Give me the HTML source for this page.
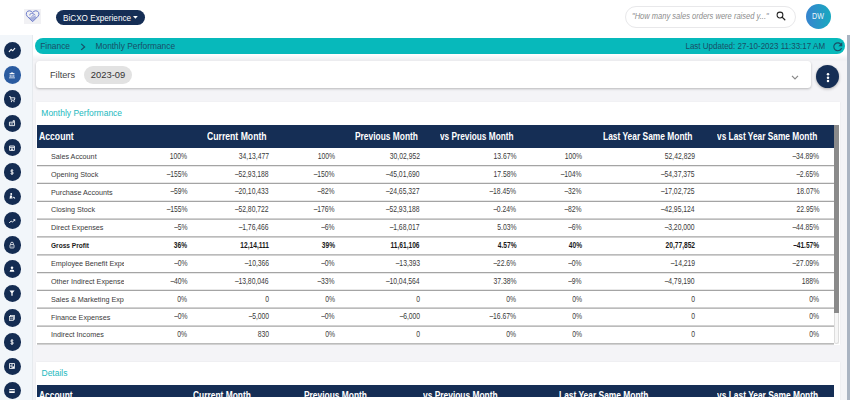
<!DOCTYPE html>
<html><head><meta charset="utf-8">
<style>
*{margin:0;padding:0;box-sizing:border-box}
html,body{width:850px;height:400px;overflow:hidden;background:#f4f4f7;font-family:"Liberation Sans",sans-serif}
.abs{position:absolute}
.t{position:absolute;white-space:nowrap;display:block}
#hdr{position:absolute;left:0;top:0;width:850px;height:35px;background:#fff}
#logo{position:absolute;left:24.2px;top:9.2px;width:16.8px;height:14.5px;background:#f1f1f4}
#pill{position:absolute;left:55.5px;top:9.8px;width:89px;height:15.6px;border-radius:8px;background:#152e55}
#search{position:absolute;left:625px;top:6px;width:171px;height:21.5px;border:1px solid #e8e8ea;border-radius:11px;background:#fff}
#avatar{position:absolute;left:805.5px;top:3.5px;width:25.5px;height:25.5px;border-radius:50%;background:linear-gradient(90deg,#3784cf,#17a9bf)}
#side{position:absolute;left:0;top:35px;width:33px;height:365px;background:#f2f6fa;border-right:1px solid #e6eaee}
.circ{position:absolute;left:3.7px;width:17.6px;height:17.6px;border-radius:50%;display:flex;align-items:center;justify-content:center}
#vscroll{position:absolute;left:847px;top:35px;width:3px;height:365px;background:#aab4c2}
#crumbbg{position:absolute;left:33px;top:35px;width:814px;height:26px;background:linear-gradient(180deg,#fff 0px,#fff 19px,#f0f0f3 25px,#f4f4f7 26px)}
#crumb{position:absolute;left:35px;top:38px;width:810px;height:15.6px;border-radius:8px;background:#07b9bb}
#filter{position:absolute;left:36px;top:61px;width:775px;height:27px;background:#fff;border-radius:3.5px;box-shadow:0 1px 2.5px rgba(0,0,0,0.25)}
#chip{position:absolute;left:84px;top:65.5px;width:48px;height:18px;border-radius:9px;background:#e2e2e2}
#kebab{position:absolute;left:816px;top:65px;width:23px;height:23px;border-radius:50%;background:#152e55;box-shadow:0 1px 3px rgba(0,0,0,0.3)}
#card1{position:absolute;left:36px;top:101.7px;width:803.5px;height:243px;background:#fff;box-shadow:0 -0.5px 1.5px rgba(0,0,0,0.08)}
#thead{position:absolute;left:37px;top:125px;width:797px;height:23px;background:#152e55}
#tscroll{position:absolute;left:834px;top:125.3px;width:5px;height:219px;background:#f6f6f6;border-radius:0 0 3px 3px;border:1px solid #ddd;border-top:none}
#tthumb{position:absolute;left:834px;top:125px;width:5px;height:188px;background:#8a8a8a}
.row{position:absolute;left:37px;width:797px;height:17.85px;border-bottom:1px solid #a0a0a0;background:#fff}
.acc{position:absolute;left:51.3px;width:72.5px;height:17px;overflow:hidden}
#tbody{position:absolute;left:37px;top:148px;width:797px;height:196.5px;background:#fff}
#card2{position:absolute;left:36px;top:361.7px;width:803.5px;height:40px;background:#fff;box-shadow:0 0 1.5px rgba(0,0,0,0.08)}
#thead2{position:absolute;left:37px;top:385px;width:797px;height:11.8px;background:#152e55;overflow:hidden}
#thead2 .t{margin-left:-37px}
</style></head><body>
<div id="hdr"></div>
<div id="logo"><svg width="17" height="15" viewBox="0 0 17 15"><path d="M8.6 12.7 L3.1 7.2 Q1.8 5.6 2.5 3.6 Q3.4 1.7 5.5 1.8 Q7.3 2 8.6 3.4 Q9.9 2 11.7 1.8 Q13.8 1.7 14.7 3.6 Q15.4 5.6 14.1 7.2 Z" fill="none" stroke="#6b7bcb" stroke-width="1.0"/><path d="M4.2 8.2 L8.6 12.2 L12.6 8.2 L10.6 6.4 L8.2 8.2 Z" fill="#6b7bcb" opacity="0.55"/><path d="M5.8 6.4 Q5.4 4.8 7.2 4.4 L9.8 4.8 L11.4 6.2 M7.4 7.8 L10 5.6" stroke="#6b7bcb" stroke-width="0.8" fill="none"/></svg></div>
<div id="pill"></div>
<span class="t" style="top:7.99px;line-height:20px;font-size:8.6px;color:#fff;left:62.60px;transform-origin:0 50%;transform:scaleX(0.95);">BiCXO Experience</span>
<svg class="abs" style="left:133px;top:16.3px" width="4.8" height="2.8" viewBox="0 0 4.8 2.8"><path d="M0 0 H4.8 L2.4 2.8Z" fill="#fff"/></svg>
<div id="search"></div>
<span class="t" style="top:6.58px;line-height:20px;font-size:8.2px;color:#8c8c8c;left:631.80px;transform-origin:0 50%;transform:scaleX(0.92);font-style:italic;">"How many sales orders were raised y..."</span>
<svg class="abs" style="left:776px;top:10.5px" width="10" height="10" viewBox="0 0 10 10"><circle cx="4" cy="4" r="2.9" stroke="#222" stroke-width="1.05" fill="none"/><path d="M6.1 6.1 L8.8 8.8" stroke="#222" stroke-width="1.3" stroke-linecap="round"/></svg>
<div id="avatar"></div>
<span class="t" style="top:6.28px;line-height:20px;font-size:8.3px;color:#eef6fb;left:812.20px;transform-origin:0 50%;transform:scaleX(0.86);">DW</span>
<div id="side"><div class="circ" style="top:6.7px;background:#142c52"><svg width="8" height="8" viewBox="0 0 10 10"><path d="M1.5 7 L4 4.2 L5.8 6 L8.5 3" stroke="#ffffff" stroke-width="1.3" fill="none" stroke-linecap="round" stroke-linejoin="round"/></svg></div><div class="circ" style="top:31.0px;background:#2a5ba0"><svg width="8" height="8" viewBox="0 0 10 10"><path d="M5 1.5 L9 3.6 L1 3.6 Z M1.3 8.2 H8.7 V9 H1.3 Z M2.2 4.3 H3.2 V7.6 H2.2Z M4.5 4.3 H5.5 V7.6 H4.5Z M6.8 4.3 H7.8 V7.6 H6.8Z" fill="#ffffff"/></svg></div><div class="circ" style="top:55.3px;background:#142c52"><svg width="8" height="8" viewBox="0 0 10 10"><path d="M1.5 2 H3 L4 6.5 H8 L8.6 3.5 H3.4" stroke="#ffffff" stroke-width="1.1" fill="none"/><circle cx="4.3" cy="8.2" r="0.8" fill="#ffffff"/><circle cx="7.5" cy="8.2" r="0.8" fill="#ffffff"/></svg></div><div class="circ" style="top:79.6px;background:#142c52"><svg width="8" height="8" viewBox="0 0 10 10"><path d="M1.8 4 H8.2 V8.3 H1.8 Z M6.5 4 V2 H8 V4" stroke="#ffffff" stroke-width="1.1" fill="none"/><path d="M3 6.2 H6.5" stroke="#ffffff" stroke-width="1"/></svg></div><div class="circ" style="top:103.9px;background:#142c52"><svg width="8" height="8" viewBox="0 0 10 10"><path d="M2 2.5 H8 V8 H2 Z M2 4.2 H8" stroke="#ffffff" stroke-width="1.1" fill="none"/><rect x="4" y="5.5" width="2" height="2.5" fill="#ffffff"/></svg></div><div class="circ" style="top:128.2px;background:#142c52"><svg width="8" height="8" viewBox="0 0 10 10"><path d="M6.7 3.4 Q6.4 2.6 5 2.6 Q3.4 2.6 3.4 3.8 Q3.4 4.8 5 5 Q6.7 5.2 6.7 6.3 Q6.7 7.5 5 7.5 Q3.5 7.5 3.2 6.6 M5 1.4 V8.7" stroke="#ffffff" stroke-width="1.05" fill="none"/></svg></div><div class="circ" style="top:152.5px;background:#142c52"><svg width="8" height="8" viewBox="0 0 10 10"><circle cx="4" cy="2.6" r="1.2" fill="#ffffff"/><path d="M2.5 4.3 H5 L5.5 8.5 H4.3 L4 6.5 L3.3 8.5 H2 Z" fill="#ffffff"/><path d="M6 7 L8.5 7 M7 6 L8.5 8.5" stroke="#ffffff" stroke-width="0.9"/></svg></div><div class="circ" style="top:176.8px;background:#142c52"><svg width="8" height="8" viewBox="0 0 10 10"><path d="M1.5 7.5 L4 5 L5.6 6.4 L8.3 3.6" stroke="#ffffff" stroke-width="1.2" fill="none" stroke-linejoin="round"/><path d="M6.2 2.8 H9 V5.6 Z" fill="#ffffff"/></svg></div><div class="circ" style="top:201.1px;background:#142c52"><svg width="8" height="8" viewBox="0 0 10 10"><path d="M3.3 4.5 V3.2 A1.7 1.7 0 0 1 6.7 3.2 V4.5" stroke="#ffffff" stroke-width="1" fill="none"/><rect x="2.5" y="4.5" width="5" height="4.2" rx="0.6" stroke="#ffffff" stroke-width="1" fill="none"/><circle cx="5" cy="6.6" r="0.6" fill="#ffffff"/></svg></div><div class="circ" style="top:225.4px;background:#142c52"><svg width="8" height="8" viewBox="0 0 10 10"><circle cx="5" cy="3.5" r="1.6" fill="#ffffff"/><path d="M2 8.3 Q2 5.6 5 5.6 Q8 5.6 8 8.3 Z" fill="#ffffff"/></svg></div><div class="circ" style="top:249.7px;background:#142c52"><svg width="8" height="8" viewBox="0 0 10 10"><path d="M1.8 2 H8.2 L5.8 5 V8.3 H4.2 V5 Z" fill="#ffffff"/></svg></div><div class="circ" style="top:274.0px;background:#142c52"><svg width="8" height="8" viewBox="0 0 10 10"><rect x="3" y="1.8" width="5.2" height="5.2" stroke="#ffffff" stroke-width="0.9" fill="none"/><rect x="1.8" y="3" width="5.2" height="5.2" stroke="#ffffff" stroke-width="0.9" fill="#142c52"/><path d="M2.8 5 H6 M2.8 6.3 H6" stroke="#ffffff" stroke-width="0.7"/></svg></div><div class="circ" style="top:298.3px;background:#142c52"><svg width="8" height="8" viewBox="0 0 10 10"><path d="M6.7 3.4 Q6.4 2.6 5 2.6 Q3.4 2.6 3.4 3.8 Q3.4 4.8 5 5 Q6.7 5.2 6.7 6.3 Q6.7 7.5 5 7.5 Q3.5 7.5 3.2 6.6 M5 1.4 V8.7" stroke="#ffffff" stroke-width="1.05" fill="none"/></svg></div><div class="circ" style="top:322.6px;background:#142c52"><svg width="8" height="8" viewBox="0 0 10 10"><rect x="2" y="2" width="6" height="6" stroke="#ffffff" stroke-width="1" fill="none"/><path d="M5 2 V8 M2 5 H5" stroke="#ffffff" stroke-width="1"/><rect x="5.5" y="5.5" width="2" height="2" fill="#ffffff"/></svg></div><div class="circ" style="top:346.9px;background:#142c52"><svg width="8" height="8" viewBox="0 0 10 10"><rect x="1.5" y="2.5" width="7" height="5" rx="0.5" fill="#ffffff"/><rect x="1.5" y="4" width="7" height="1.3" fill="#142c52"/></svg></div></div>
<div id="vscroll"></div>
<div id="crumbbg"></div><div id="crumb"></div>
<span class="t" style="top:36.29px;line-height:20px;font-size:8.4px;color:#194e66;left:40.20px;transform-origin:0 50%;">Finance</span>
<svg class="abs" style="left:80px;top:42.5px" width="6" height="8" viewBox="0 0 6 8"><path d="M1.2 0.9 L4.6 3.9 L1.2 6.9" stroke="#194e66" stroke-width="1.25" fill="none"/></svg>
<span class="t" style="top:36.29px;line-height:20px;font-size:8.4px;color:#194e66;left:95.50px;transform-origin:0 50%;">Monthly Performance</span>
<span class="t" style="top:36.29px;line-height:20px;font-size:8.4px;color:#194e66;right:24.80px;transform-origin:100% 50%;transform:scaleX(0.956);">Last Updated: 27-10-2023 11:33:17 AM</span>
<svg class="abs" style="left:830.6px;top:40px" width="13.5" height="13.5" viewBox="0 0 24 24"><path d="M17.65 6.35C16.2 4.9 14.21 4 12 4c-4.42 0-7.99 3.58-7.99 8s3.57 8 7.99 8c3.73 0 6.84-2.55 7.73-6h-2.08c-.82 2.33-3.04 4-5.65 4-3.31 0-6-2.69-6-6s2.69-6 6-6c1.66 0 3.14.69 4.22 1.78L13 11h7V4l-2.35 2.35z" fill="#194e66"/></svg>
<div id="filter"></div>
<span class="t" style="top:65.32px;line-height:20px;font-size:9.4px;color:#444;left:49.60px;transform-origin:0 50%;transform:scaleX(0.98);">Filters</span>
<svg class="abs" style="left:790.5px;top:74.5px" width="8" height="5" viewBox="0 0 8 5"><path d="M1 0.9 L4 3.9 L7 0.9" stroke="#888" stroke-width="1.2" fill="none"/></svg>
<div id="chip"></div>
<span class="t" style="top:64.52px;line-height:20px;font-size:9.4px;color:#333;left:90.80px;transform-origin:0 50%;">2023-09</span>
<div id="kebab"><svg class="abs" style="left:9.5px;top:6.5px" width="4" height="11" viewBox="0 0 4 11"><circle cx="2" cy="2.3" r="1.25" fill="#fff"/><circle cx="2" cy="5.7" r="1.25" fill="#fff"/><circle cx="2" cy="9.1" r="1.25" fill="#fff"/></svg></div>
<div id="card1"></div><div id="tbody"></div>
<span class="t" style="top:103.29px;line-height:20px;font-size:8.5px;color:#22b9be;left:41.30px;transform-origin:0 50%;">Monthly Performance</span>
<div id="thead"></div>
<span class="t" style="top:125.96px;line-height:20px;font-size:10.5px;font-weight:bold;color:#fff;left:39.10px;transform-origin:0 50%;transform:scaleX(0.824);">Account</span><span class="t" style="top:125.96px;line-height:20px;font-size:10.5px;font-weight:bold;color:#fff;left:207.00px;transform-origin:0 50%;transform:scaleX(0.824);">Current Month</span><span class="t" style="top:125.96px;line-height:20px;font-size:10.5px;font-weight:bold;color:#fff;left:354.70px;transform-origin:0 50%;transform:scaleX(0.799);">Previous Month</span><span class="t" style="top:125.96px;line-height:20px;font-size:10.5px;font-weight:bold;color:#fff;left:440.10px;transform-origin:0 50%;transform:scaleX(0.788);">vs Previous Month</span><span class="t" style="top:125.96px;line-height:20px;font-size:10.5px;font-weight:bold;color:#fff;left:603.10px;transform-origin:0 50%;transform:scaleX(0.8);">Last Year Same Month</span><span class="t" style="top:125.96px;line-height:20px;font-size:10.5px;font-weight:bold;color:#fff;left:716.50px;transform-origin:0 50%;transform:scaleX(0.793);">vs Last Year Same Month</span>
<svg class="abs" style="left:0;top:0" width="850" height="400" viewBox="0 0 850 400"><line x1="37" x2="834" y1="165.60" y2="165.60" stroke="#a4a4a4" stroke-width="1.25"/><line x1="37" x2="834" y1="183.43" y2="183.43" stroke="#a4a4a4" stroke-width="1.25"/><line x1="37" x2="834" y1="201.26" y2="201.26" stroke="#a4a4a4" stroke-width="1.25"/><line x1="37" x2="834" y1="219.09" y2="219.09" stroke="#a4a4a4" stroke-width="1.25"/><line x1="37" x2="834" y1="236.92" y2="236.92" stroke="#a4a4a4" stroke-width="1.25"/><line x1="37" x2="834" y1="254.75" y2="254.75" stroke="#a4a4a4" stroke-width="1.25"/><line x1="37" x2="834" y1="272.58" y2="272.58" stroke="#a4a4a4" stroke-width="1.25"/><line x1="37" x2="834" y1="290.41" y2="290.41" stroke="#a4a4a4" stroke-width="1.25"/><line x1="37" x2="834" y1="308.24" y2="308.24" stroke="#a4a4a4" stroke-width="1.25"/><line x1="37" x2="834" y1="326.07" y2="326.07" stroke="#a4a4a4" stroke-width="1.25"/><line x1="37" x2="834" y1="343.90" y2="343.90" stroke="#a4a4a4" stroke-width="1.25"/></svg><div class="acc" style="top:148.10px"><span class="t" style="top:-1.23px;line-height:20px;font-size:8.0px;color:#3a3a3a;left:0px;transform-origin:0 50%;transform:scaleX(0.9);">Sales Account</span></div><span class="t" style="top:145.71px;line-height:20px;font-size:9.0px;color:#3a3a3a;right:662.70px;transform-origin:100% 50%;transform:scaleX(0.755);">100%</span><span class="t" style="top:145.71px;line-height:20px;font-size:9.0px;color:#3a3a3a;right:581.10px;transform-origin:100% 50%;transform:scaleX(0.755);">34,13,477</span><span class="t" style="top:145.71px;line-height:20px;font-size:9.0px;color:#3a3a3a;right:514.90px;transform-origin:100% 50%;transform:scaleX(0.755);">100%</span><span class="t" style="top:145.71px;line-height:20px;font-size:9.0px;color:#3a3a3a;right:430.30px;transform-origin:100% 50%;transform:scaleX(0.755);">30,02,952</span><span class="t" style="top:145.71px;line-height:20px;font-size:9.0px;color:#3a3a3a;right:333.80px;transform-origin:100% 50%;transform:scaleX(0.755);">13.67%</span><span class="t" style="top:145.71px;line-height:20px;font-size:9.0px;color:#3a3a3a;right:267.90px;transform-origin:100% 50%;transform:scaleX(0.755);">100%</span><span class="t" style="top:145.71px;line-height:20px;font-size:9.0px;color:#3a3a3a;right:155.00px;transform-origin:100% 50%;transform:scaleX(0.755);">52,42,829</span><span class="t" style="top:145.71px;line-height:20px;font-size:9.0px;color:#3a3a3a;right:30.70px;transform-origin:100% 50%;transform:scaleX(0.755);"><span style="letter-spacing:-0.4px">&#8211;</span>34.89%</span><div class="acc" style="top:165.95px"><span class="t" style="top:-1.23px;line-height:20px;font-size:8.0px;color:#3a3a3a;left:0px;transform-origin:0 50%;transform:scaleX(0.9);">Opening Stock</span></div><span class="t" style="top:163.56px;line-height:20px;font-size:9.0px;color:#3a3a3a;right:662.70px;transform-origin:100% 50%;transform:scaleX(0.755);"><span style="letter-spacing:-0.4px">&#8211;</span>155%</span><span class="t" style="top:163.56px;line-height:20px;font-size:9.0px;color:#3a3a3a;right:581.10px;transform-origin:100% 50%;transform:scaleX(0.755);"><span style="letter-spacing:-0.4px">&#8211;</span>52,93,188</span><span class="t" style="top:163.56px;line-height:20px;font-size:9.0px;color:#3a3a3a;right:514.90px;transform-origin:100% 50%;transform:scaleX(0.755);"><span style="letter-spacing:-0.4px">&#8211;</span>150%</span><span class="t" style="top:163.56px;line-height:20px;font-size:9.0px;color:#3a3a3a;right:430.30px;transform-origin:100% 50%;transform:scaleX(0.755);"><span style="letter-spacing:-0.4px">&#8211;</span>45,01,690</span><span class="t" style="top:163.56px;line-height:20px;font-size:9.0px;color:#3a3a3a;right:333.80px;transform-origin:100% 50%;transform:scaleX(0.755);">17.58%</span><span class="t" style="top:163.56px;line-height:20px;font-size:9.0px;color:#3a3a3a;right:267.90px;transform-origin:100% 50%;transform:scaleX(0.755);"><span style="letter-spacing:-0.4px">&#8211;</span>104%</span><span class="t" style="top:163.56px;line-height:20px;font-size:9.0px;color:#3a3a3a;right:155.00px;transform-origin:100% 50%;transform:scaleX(0.755);"><span style="letter-spacing:-0.4px">&#8211;</span>54,37,375</span><span class="t" style="top:163.56px;line-height:20px;font-size:9.0px;color:#3a3a3a;right:30.70px;transform-origin:100% 50%;transform:scaleX(0.755);"><span style="letter-spacing:-0.4px">&#8211;</span>2.65%</span><div class="acc" style="top:183.80px"><span class="t" style="top:-1.23px;line-height:20px;font-size:8.0px;color:#3a3a3a;left:0px;transform-origin:0 50%;transform:scaleX(0.9);">Purchase Accounts</span></div><span class="t" style="top:181.41px;line-height:20px;font-size:9.0px;color:#3a3a3a;right:662.70px;transform-origin:100% 50%;transform:scaleX(0.755);"><span style="letter-spacing:-0.4px">&#8211;</span>59%</span><span class="t" style="top:181.41px;line-height:20px;font-size:9.0px;color:#3a3a3a;right:581.10px;transform-origin:100% 50%;transform:scaleX(0.755);"><span style="letter-spacing:-0.4px">&#8211;</span>20,10,433</span><span class="t" style="top:181.41px;line-height:20px;font-size:9.0px;color:#3a3a3a;right:514.90px;transform-origin:100% 50%;transform:scaleX(0.755);"><span style="letter-spacing:-0.4px">&#8211;</span>82%</span><span class="t" style="top:181.41px;line-height:20px;font-size:9.0px;color:#3a3a3a;right:430.30px;transform-origin:100% 50%;transform:scaleX(0.755);"><span style="letter-spacing:-0.4px">&#8211;</span>24,65,327</span><span class="t" style="top:181.41px;line-height:20px;font-size:9.0px;color:#3a3a3a;right:333.80px;transform-origin:100% 50%;transform:scaleX(0.755);"><span style="letter-spacing:-0.4px">&#8211;</span>18.45%</span><span class="t" style="top:181.41px;line-height:20px;font-size:9.0px;color:#3a3a3a;right:267.90px;transform-origin:100% 50%;transform:scaleX(0.755);"><span style="letter-spacing:-0.4px">&#8211;</span>32%</span><span class="t" style="top:181.41px;line-height:20px;font-size:9.0px;color:#3a3a3a;right:155.00px;transform-origin:100% 50%;transform:scaleX(0.755);"><span style="letter-spacing:-0.4px">&#8211;</span>17,02,725</span><span class="t" style="top:181.41px;line-height:20px;font-size:9.0px;color:#3a3a3a;right:30.70px;transform-origin:100% 50%;transform:scaleX(0.755);">18.07%</span><div class="acc" style="top:201.65px"><span class="t" style="top:-1.23px;line-height:20px;font-size:8.0px;color:#3a3a3a;left:0px;transform-origin:0 50%;transform:scaleX(0.9);">Closing Stock</span></div><span class="t" style="top:199.26px;line-height:20px;font-size:9.0px;color:#3a3a3a;right:662.70px;transform-origin:100% 50%;transform:scaleX(0.755);"><span style="letter-spacing:-0.4px">&#8211;</span>155%</span><span class="t" style="top:199.26px;line-height:20px;font-size:9.0px;color:#3a3a3a;right:581.10px;transform-origin:100% 50%;transform:scaleX(0.755);"><span style="letter-spacing:-0.4px">&#8211;</span>52,80,722</span><span class="t" style="top:199.26px;line-height:20px;font-size:9.0px;color:#3a3a3a;right:514.90px;transform-origin:100% 50%;transform:scaleX(0.755);"><span style="letter-spacing:-0.4px">&#8211;</span>176%</span><span class="t" style="top:199.26px;line-height:20px;font-size:9.0px;color:#3a3a3a;right:430.30px;transform-origin:100% 50%;transform:scaleX(0.755);"><span style="letter-spacing:-0.4px">&#8211;</span>52,93,188</span><span class="t" style="top:199.26px;line-height:20px;font-size:9.0px;color:#3a3a3a;right:333.80px;transform-origin:100% 50%;transform:scaleX(0.755);"><span style="letter-spacing:-0.4px">&#8211;</span>0.24%</span><span class="t" style="top:199.26px;line-height:20px;font-size:9.0px;color:#3a3a3a;right:267.90px;transform-origin:100% 50%;transform:scaleX(0.755);"><span style="letter-spacing:-0.4px">&#8211;</span>82%</span><span class="t" style="top:199.26px;line-height:20px;font-size:9.0px;color:#3a3a3a;right:155.00px;transform-origin:100% 50%;transform:scaleX(0.755);"><span style="letter-spacing:-0.4px">&#8211;</span>42,95,124</span><span class="t" style="top:199.26px;line-height:20px;font-size:9.0px;color:#3a3a3a;right:30.70px;transform-origin:100% 50%;transform:scaleX(0.755);">22.95%</span><div class="acc" style="top:219.50px"><span class="t" style="top:-1.23px;line-height:20px;font-size:8.0px;color:#3a3a3a;left:0px;transform-origin:0 50%;transform:scaleX(0.9);">Direct Expenses</span></div><span class="t" style="top:217.11px;line-height:20px;font-size:9.0px;color:#3a3a3a;right:662.70px;transform-origin:100% 50%;transform:scaleX(0.755);"><span style="letter-spacing:-0.4px">&#8211;</span>5%</span><span class="t" style="top:217.11px;line-height:20px;font-size:9.0px;color:#3a3a3a;right:581.10px;transform-origin:100% 50%;transform:scaleX(0.755);"><span style="letter-spacing:-0.4px">&#8211;</span>1,76,466</span><span class="t" style="top:217.11px;line-height:20px;font-size:9.0px;color:#3a3a3a;right:514.90px;transform-origin:100% 50%;transform:scaleX(0.755);"><span style="letter-spacing:-0.4px">&#8211;</span>6%</span><span class="t" style="top:217.11px;line-height:20px;font-size:9.0px;color:#3a3a3a;right:430.30px;transform-origin:100% 50%;transform:scaleX(0.755);"><span style="letter-spacing:-0.4px">&#8211;</span>1,68,017</span><span class="t" style="top:217.11px;line-height:20px;font-size:9.0px;color:#3a3a3a;right:333.80px;transform-origin:100% 50%;transform:scaleX(0.755);">5.03%</span><span class="t" style="top:217.11px;line-height:20px;font-size:9.0px;color:#3a3a3a;right:267.90px;transform-origin:100% 50%;transform:scaleX(0.755);"><span style="letter-spacing:-0.4px">&#8211;</span>6%</span><span class="t" style="top:217.11px;line-height:20px;font-size:9.0px;color:#3a3a3a;right:155.00px;transform-origin:100% 50%;transform:scaleX(0.755);"><span style="letter-spacing:-0.4px">&#8211;</span>3,20,000</span><span class="t" style="top:217.11px;line-height:20px;font-size:9.0px;color:#3a3a3a;right:30.70px;transform-origin:100% 50%;transform:scaleX(0.755);"><span style="letter-spacing:-0.4px">&#8211;</span>44.85%</span><div class="acc" style="top:237.35px"><span class="t" style="top:-1.23px;line-height:20px;font-size:8.0px;font-weight:bold;color:#1a1a1a;left:0px;transform-origin:0 50%;transform:scaleX(0.82);">Gross Profit</span></div><span class="t" style="top:234.96px;line-height:20px;font-size:9.0px;font-weight:bold;color:#1a1a1a;right:662.70px;transform-origin:100% 50%;transform:scaleX(0.735);">36%</span><span class="t" style="top:234.96px;line-height:20px;font-size:9.0px;font-weight:bold;color:#1a1a1a;right:581.10px;transform-origin:100% 50%;transform:scaleX(0.735);">12,14,111</span><span class="t" style="top:234.96px;line-height:20px;font-size:9.0px;font-weight:bold;color:#1a1a1a;right:514.90px;transform-origin:100% 50%;transform:scaleX(0.735);">39%</span><span class="t" style="top:234.96px;line-height:20px;font-size:9.0px;font-weight:bold;color:#1a1a1a;right:430.30px;transform-origin:100% 50%;transform:scaleX(0.735);">11,61,106</span><span class="t" style="top:234.96px;line-height:20px;font-size:9.0px;font-weight:bold;color:#1a1a1a;right:333.80px;transform-origin:100% 50%;transform:scaleX(0.735);">4.57%</span><span class="t" style="top:234.96px;line-height:20px;font-size:9.0px;font-weight:bold;color:#1a1a1a;right:267.90px;transform-origin:100% 50%;transform:scaleX(0.735);">40%</span><span class="t" style="top:234.96px;line-height:20px;font-size:9.0px;font-weight:bold;color:#1a1a1a;right:155.00px;transform-origin:100% 50%;transform:scaleX(0.735);">20,77,852</span><span class="t" style="top:234.96px;line-height:20px;font-size:9.0px;font-weight:bold;color:#1a1a1a;right:30.70px;transform-origin:100% 50%;transform:scaleX(0.735);"><span style="letter-spacing:-0.4px">&#8211;</span>41.57%</span><div class="acc" style="top:255.20px"><span class="t" style="top:-1.23px;line-height:20px;font-size:8.0px;color:#3a3a3a;left:0px;transform-origin:0 50%;transform:scaleX(0.9);">Employee Benefit Expenses</span></div><span class="t" style="top:252.81px;line-height:20px;font-size:9.0px;color:#3a3a3a;right:662.70px;transform-origin:100% 50%;transform:scaleX(0.755);"><span style="letter-spacing:-0.4px">&#8211;</span>0%</span><span class="t" style="top:252.81px;line-height:20px;font-size:9.0px;color:#3a3a3a;right:581.10px;transform-origin:100% 50%;transform:scaleX(0.755);"><span style="letter-spacing:-0.4px">&#8211;</span>10,366</span><span class="t" style="top:252.81px;line-height:20px;font-size:9.0px;color:#3a3a3a;right:514.90px;transform-origin:100% 50%;transform:scaleX(0.755);"><span style="letter-spacing:-0.4px">&#8211;</span>0%</span><span class="t" style="top:252.81px;line-height:20px;font-size:9.0px;color:#3a3a3a;right:430.30px;transform-origin:100% 50%;transform:scaleX(0.755);"><span style="letter-spacing:-0.4px">&#8211;</span>13,393</span><span class="t" style="top:252.81px;line-height:20px;font-size:9.0px;color:#3a3a3a;right:333.80px;transform-origin:100% 50%;transform:scaleX(0.755);"><span style="letter-spacing:-0.4px">&#8211;</span>22.6%</span><span class="t" style="top:252.81px;line-height:20px;font-size:9.0px;color:#3a3a3a;right:267.90px;transform-origin:100% 50%;transform:scaleX(0.755);"><span style="letter-spacing:-0.4px">&#8211;</span>0%</span><span class="t" style="top:252.81px;line-height:20px;font-size:9.0px;color:#3a3a3a;right:155.00px;transform-origin:100% 50%;transform:scaleX(0.755);"><span style="letter-spacing:-0.4px">&#8211;</span>14,219</span><span class="t" style="top:252.81px;line-height:20px;font-size:9.0px;color:#3a3a3a;right:30.70px;transform-origin:100% 50%;transform:scaleX(0.755);"><span style="letter-spacing:-0.4px">&#8211;</span>27.09%</span><div class="acc" style="top:273.05px"><span class="t" style="top:-1.23px;line-height:20px;font-size:8.0px;color:#3a3a3a;left:0px;transform-origin:0 50%;transform:scaleX(0.9);">Other Indirect Expenses</span></div><span class="t" style="top:270.66px;line-height:20px;font-size:9.0px;color:#3a3a3a;right:662.70px;transform-origin:100% 50%;transform:scaleX(0.755);"><span style="letter-spacing:-0.4px">&#8211;</span>40%</span><span class="t" style="top:270.66px;line-height:20px;font-size:9.0px;color:#3a3a3a;right:581.10px;transform-origin:100% 50%;transform:scaleX(0.755);"><span style="letter-spacing:-0.4px">&#8211;</span>13,80,046</span><span class="t" style="top:270.66px;line-height:20px;font-size:9.0px;color:#3a3a3a;right:514.90px;transform-origin:100% 50%;transform:scaleX(0.755);"><span style="letter-spacing:-0.4px">&#8211;</span>33%</span><span class="t" style="top:270.66px;line-height:20px;font-size:9.0px;color:#3a3a3a;right:430.30px;transform-origin:100% 50%;transform:scaleX(0.755);"><span style="letter-spacing:-0.4px">&#8211;</span>10,04,564</span><span class="t" style="top:270.66px;line-height:20px;font-size:9.0px;color:#3a3a3a;right:333.80px;transform-origin:100% 50%;transform:scaleX(0.755);">37.38%</span><span class="t" style="top:270.66px;line-height:20px;font-size:9.0px;color:#3a3a3a;right:267.90px;transform-origin:100% 50%;transform:scaleX(0.755);"><span style="letter-spacing:-0.4px">&#8211;</span>9%</span><span class="t" style="top:270.66px;line-height:20px;font-size:9.0px;color:#3a3a3a;right:155.00px;transform-origin:100% 50%;transform:scaleX(0.755);"><span style="letter-spacing:-0.4px">&#8211;</span>4,79,190</span><span class="t" style="top:270.66px;line-height:20px;font-size:9.0px;color:#3a3a3a;right:30.70px;transform-origin:100% 50%;transform:scaleX(0.755);">188%</span><div class="acc" style="top:290.90px"><span class="t" style="top:-1.23px;line-height:20px;font-size:8.0px;color:#3a3a3a;left:0px;transform-origin:0 50%;transform:scaleX(0.9);">Sales &amp; Marketing Expenses</span></div><span class="t" style="top:288.51px;line-height:20px;font-size:9.0px;color:#3a3a3a;right:662.70px;transform-origin:100% 50%;transform:scaleX(0.755);">0%</span><span class="t" style="top:288.51px;line-height:20px;font-size:9.0px;color:#3a3a3a;right:581.10px;transform-origin:100% 50%;transform:scaleX(0.755);">0</span><span class="t" style="top:288.51px;line-height:20px;font-size:9.0px;color:#3a3a3a;right:514.90px;transform-origin:100% 50%;transform:scaleX(0.755);">0%</span><span class="t" style="top:288.51px;line-height:20px;font-size:9.0px;color:#3a3a3a;right:430.30px;transform-origin:100% 50%;transform:scaleX(0.755);">0</span><span class="t" style="top:288.51px;line-height:20px;font-size:9.0px;color:#3a3a3a;right:333.80px;transform-origin:100% 50%;transform:scaleX(0.755);">0%</span><span class="t" style="top:288.51px;line-height:20px;font-size:9.0px;color:#3a3a3a;right:267.90px;transform-origin:100% 50%;transform:scaleX(0.755);">0%</span><span class="t" style="top:288.51px;line-height:20px;font-size:9.0px;color:#3a3a3a;right:155.00px;transform-origin:100% 50%;transform:scaleX(0.755);">0</span><span class="t" style="top:288.51px;line-height:20px;font-size:9.0px;color:#3a3a3a;right:30.70px;transform-origin:100% 50%;transform:scaleX(0.755);">0%</span><div class="acc" style="top:308.75px"><span class="t" style="top:-1.23px;line-height:20px;font-size:8.0px;color:#3a3a3a;left:0px;transform-origin:0 50%;transform:scaleX(0.9);">Finance Expenses</span></div><span class="t" style="top:306.36px;line-height:20px;font-size:9.0px;color:#3a3a3a;right:662.70px;transform-origin:100% 50%;transform:scaleX(0.755);"><span style="letter-spacing:-0.4px">&#8211;</span>0%</span><span class="t" style="top:306.36px;line-height:20px;font-size:9.0px;color:#3a3a3a;right:581.10px;transform-origin:100% 50%;transform:scaleX(0.755);"><span style="letter-spacing:-0.4px">&#8211;</span>5,000</span><span class="t" style="top:306.36px;line-height:20px;font-size:9.0px;color:#3a3a3a;right:514.90px;transform-origin:100% 50%;transform:scaleX(0.755);"><span style="letter-spacing:-0.4px">&#8211;</span>0%</span><span class="t" style="top:306.36px;line-height:20px;font-size:9.0px;color:#3a3a3a;right:430.30px;transform-origin:100% 50%;transform:scaleX(0.755);"><span style="letter-spacing:-0.4px">&#8211;</span>6,000</span><span class="t" style="top:306.36px;line-height:20px;font-size:9.0px;color:#3a3a3a;right:333.80px;transform-origin:100% 50%;transform:scaleX(0.755);"><span style="letter-spacing:-0.4px">&#8211;</span>16.67%</span><span class="t" style="top:306.36px;line-height:20px;font-size:9.0px;color:#3a3a3a;right:267.90px;transform-origin:100% 50%;transform:scaleX(0.755);">0%</span><span class="t" style="top:306.36px;line-height:20px;font-size:9.0px;color:#3a3a3a;right:155.00px;transform-origin:100% 50%;transform:scaleX(0.755);">0</span><span class="t" style="top:306.36px;line-height:20px;font-size:9.0px;color:#3a3a3a;right:30.70px;transform-origin:100% 50%;transform:scaleX(0.755);">0%</span><div class="acc" style="top:326.60px"><span class="t" style="top:-1.23px;line-height:20px;font-size:8.0px;color:#3a3a3a;left:0px;transform-origin:0 50%;transform:scaleX(0.9);">Indirect Incomes</span></div><span class="t" style="top:324.21px;line-height:20px;font-size:9.0px;color:#3a3a3a;right:662.70px;transform-origin:100% 50%;transform:scaleX(0.755);">0%</span><span class="t" style="top:324.21px;line-height:20px;font-size:9.0px;color:#3a3a3a;right:581.10px;transform-origin:100% 50%;transform:scaleX(0.755);">830</span><span class="t" style="top:324.21px;line-height:20px;font-size:9.0px;color:#3a3a3a;right:514.90px;transform-origin:100% 50%;transform:scaleX(0.755);">0%</span><span class="t" style="top:324.21px;line-height:20px;font-size:9.0px;color:#3a3a3a;right:430.30px;transform-origin:100% 50%;transform:scaleX(0.755);">0</span><span class="t" style="top:324.21px;line-height:20px;font-size:9.0px;color:#3a3a3a;right:333.80px;transform-origin:100% 50%;transform:scaleX(0.755);">0%</span><span class="t" style="top:324.21px;line-height:20px;font-size:9.0px;color:#3a3a3a;right:267.90px;transform-origin:100% 50%;transform:scaleX(0.755);">0%</span><span class="t" style="top:324.21px;line-height:20px;font-size:9.0px;color:#3a3a3a;right:155.00px;transform-origin:100% 50%;transform:scaleX(0.755);">0</span><span class="t" style="top:324.21px;line-height:20px;font-size:9.0px;color:#3a3a3a;right:30.70px;transform-origin:100% 50%;transform:scaleX(0.755);">0%</span>
<div id="tscroll"></div><div id="tthumb"></div>
<div id="card2"></div>
<span class="t" style="top:362.99px;line-height:20px;font-size:8.5px;color:#22b9be;left:41.50px;transform-origin:0 50%;">Details</span>
<div id="thead2"><span class="t" style="top:0.06px;line-height:20px;font-size:10.5px;font-weight:bold;color:#fff;left:39.10px;transform-origin:0 50%;transform:scaleX(0.8);">Account</span><span class="t" style="top:0.06px;line-height:20px;font-size:10.5px;font-weight:bold;color:#fff;left:192.50px;transform-origin:0 50%;transform:scaleX(0.8);">Current Month</span><span class="t" style="top:0.06px;line-height:20px;font-size:10.5px;font-weight:bold;color:#fff;left:303.50px;transform-origin:0 50%;transform:scaleX(0.8);">Previous Month</span><span class="t" style="top:0.06px;line-height:20px;font-size:10.5px;font-weight:bold;color:#fff;left:422.50px;transform-origin:0 50%;transform:scaleX(0.8);">vs Previous Month</span><span class="t" style="top:0.06px;line-height:20px;font-size:10.5px;font-weight:bold;color:#fff;left:558.50px;transform-origin:0 50%;transform:scaleX(0.8);">Last Year Same Month</span><span class="t" style="top:0.06px;line-height:20px;font-size:10.5px;font-weight:bold;color:#fff;left:716.50px;transform-origin:0 50%;transform:scaleX(0.8);">vs Last Year Same Month</span></div>
</body></html>
